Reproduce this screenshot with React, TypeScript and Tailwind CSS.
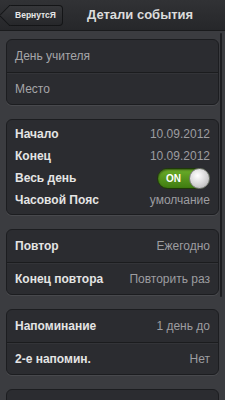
const font = { fontFamily: '"Liberation Sans", Arial, sans-serif' };

type Row = { label: string; value?: string; toggle?: boolean };

const Toggle = () => (
  <div className="relative flex h-[21px] w-[53px] items-center rounded-full border border-[#1f3a08] bg-gradient-to-b from-[#6cae2a] to-[#3f7c10] shadow-[inset_0_1px_2px_rgba(0,0,0,0.5)]">
    <span className="ml-[8px] text-[10px] font-bold text-white">ON</span>
    <div className="absolute right-[-1px] top-[-1px] h-[21px] w-[21px] rounded-full border border-[#7a7a7a] bg-[radial-gradient(circle_at_40%_35%,#ffffff,#d4d4d4_55%,#a9a9a9)]" />
  </div>
);

const LinedGroup = ({ rows, bold }: { rows: Row[]; bold?: boolean }) => (
  <div className="overflow-hidden rounded-[6px] border border-[#1c1d20] bg-[#2b2c30] shadow-[0_1px_0_rgba(255,255,255,0.07)]">
    {rows.map((r, i) => (
      <div
        key={i}
        className={`flex h-[32px] items-center justify-between px-[8px] ${i > 0 ? 'border-t border-[#1b1c1e] shadow-[inset_0_1px_0_rgba(255,255,255,0.04)]' : ''}`}
      >
        <span className={bold ? 'text-[12px] font-bold text-[#e4e4e4]' : 'text-[12px] text-[#a6a6a9]'}>
          {r.label}
        </span>
        {r.value && <span className="text-[12px] text-[#9d9da0]">{r.value}</span>}
      </div>
    ))}
  </div>
);

export default function App() {
  const timeRows: Row[] = [
    { label: 'Начало', value: '10.09.2012' },
    { label: 'Конец', value: '10.09.2012' },
    { label: 'Весь день', toggle: true },
    { label: 'Часовой Пояс', value: 'умолчание' },
  ];

  return (
    <div className="relative h-[400px] w-[225px] overflow-hidden bg-[#3b3c40]" style={font}>
      <div className="relative flex h-[31px] items-center border-b border-[#1a1b1d] bg-gradient-to-b from-[#313235] to-[#26272a]">
        <div className="relative ml-[9px] flex h-[21px] w-[54px] items-center justify-center rounded-r-[4px] border-y border-r border-[#141517] bg-gradient-to-b from-[#36373a] to-[#26272a]">
          <div className="absolute left-[-7px] top-[2px] h-[15px] w-[15px] rotate-45 border-b border-l border-[#141517] bg-gradient-to-br from-[#36373a] to-[#26272a]" />
          <span className="relative text-[8.5px] font-bold text-[#e6e6e6]">ВернутсЯ</span>
        </div>
        <span className="ml-[24px] text-[13px] font-bold text-[#dcdcdc]">Детали события</span>
      </div>

      <div className="absolute right-[3px] top-[33px] h-[264px] w-[2px] rounded-full bg-[#1d1e21]" />

      <div className="flex flex-col gap-[14px] pl-[6px] pr-[6px] pt-[8px]">
        <LinedGroup rows={[{ label: 'День учителя' }, { label: 'Место' }]} />

        <div className="rounded-[6px] border border-[#1c1d20] bg-[#2b2c30] py-[3px] shadow-[0_1px_0_rgba(255,255,255,0.07)]">
          {timeRows.map((r) => (
            <div key={r.label} className="flex h-[22px] items-center justify-between px-[8px]">
              <span className="text-[12px] font-bold text-[#e4e4e4]">{r.label}</span>
              {r.toggle ? <Toggle /> : <span className="text-[12px] text-[#9d9da0]">{r.value}</span>}
            </div>
          ))}
        </div>

        <LinedGroup
          bold
          rows={[
            { label: 'Повтор', value: 'Ежегодно' },
            { label: 'Конец повтора', value: 'Повторить раз' },
          ]}
        />

        <LinedGroup
          bold
          rows={[
            { label: 'Напоминание', value: '1 день до' },
            { label: '2-е напомин.', value: 'Нет' },
          ]}
        />

        <LinedGroup rows={[{ label: '' }, { label: '' }]} />
      </div>
    </div>
  );
}
